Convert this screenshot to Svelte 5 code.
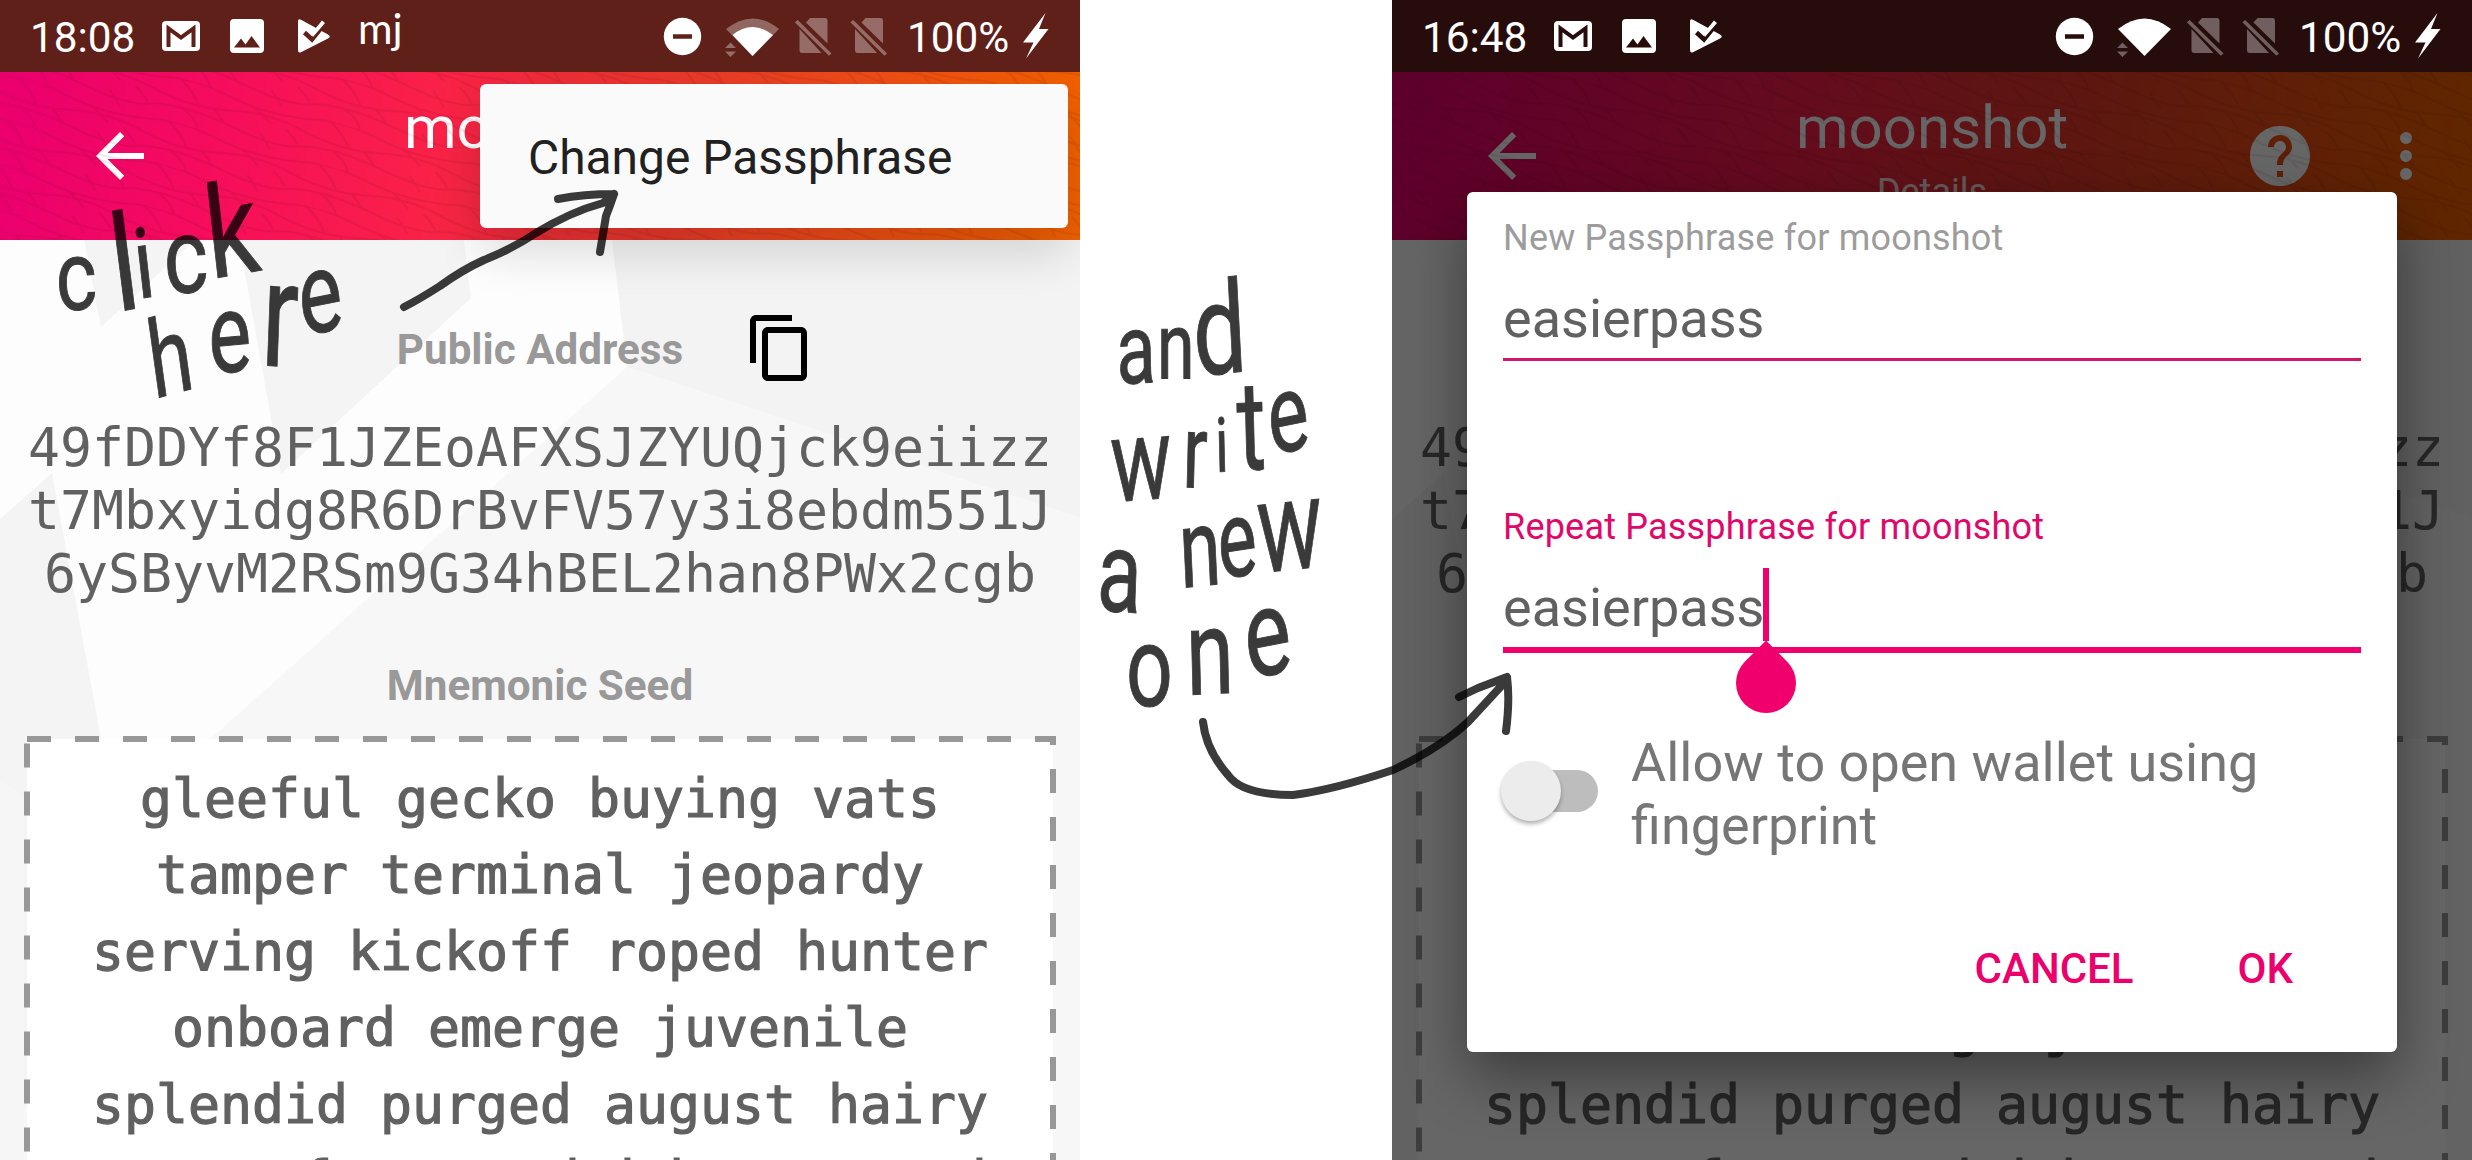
<script>
  const address = [
    '49fDDYf8F1JZEoAFXSJZYUQjck9eiizz',
    't7Mbxyidg8R6DrBvFV57y3i8ebdm551J',
    '6ySByvM2RSm9G34hBEL2han8PWx2cgb'
  ];
  const seed = [
    'gleeful gecko buying vats',
    'tamper terminal jeopardy',
    'serving kickoff roped hunter',
    'onboard emerge juvenile',
    'splendid purged august hairy',
    'answer faxes raishd overreach'
  ];

  // Handwritten notes: each letter has its own origin, size and tilt.
  const notes = [
    { word: 'click', sx: 0.8, x: [57, 117, 138, 165, 211], y: [311, 312, 299, 294, 279], r: [-3, -9, -8, -3, -8], s: [98, 134, 98, 106, 128] },
    { word: 'here', sx: 0.72, x: [154, 210, 260, 302], y: [399, 374, 365, 336], r: [-11, -4, 3, -8], s: [108, 112, 150, 114] },
    { word: 'and', sx: 0.74, x: [1117, 1157, 1195], y: [384, 378, 376], r: [-2, 0, -4], s: [98, 92, 128] },
    { word: 'write', sx: 0.7, x: [1112, 1182, 1216, 1238, 1271], y: [502, 487, 472, 470, 455], r: [-3, 2, -2, -2, -8], s: [116, 104, 76, 126, 110] },
    { word: 'a', sx: 0.72, x: [1096], y: [610], r: [3], s: [114] },
    { word: 'new', sx: 0.68, x: [1181, 1220, 1259], y: [588, 579, 573], r: [-4, -6, -4], s: [110, 108, 128] },
    { word: 'one', sx: 0.72, x: [1126, 1187, 1248], y: [706, 695, 679], r: [0, -2, -8], s: [114, 120, 122] }
  ];
</script>

{#snippet statusBar(time, weakWifi, notice)}
  <div class="status">
    <span class="time">{time}</span>
    <svg class="left-icons" viewBox="162 0 240 72" width="240" height="72">
      <rect x="162" y="21" width="38" height="30" rx="4" fill="#fff" />
      <path class="cut" d="M168.5 47V28.5L181 37.5L193.5 28.5V47" fill="none" stroke-width="4" />
      <rect x="230" y="19" width="34" height="34" rx="4" fill="#fff" />
      <path class="cutfill" d="M234 47.5l7-9 4.5 6 6-8.500 8.500 11.500z" />
      <path d="M298 21.500Q298 18 301 19.700L328 34.500Q331.500 36.500 328 38.500L301 52.300Q298 53.500 298 50z" fill="#fff" />
      <path class="cut" d="M304.500 32.500l7.500 7L326 22" fill="none" stroke-width="4.500" />
      <path d="M308.500 28.500l4 3.500L322 20.500l3 2.500-12 14" fill="#fff" />
      {#if notice}<text class="notice" x="358" y="43.500">mj</text>{/if}
    </svg>
    <svg class="right-icons" viewBox="660 0 240 72" width="240" height="72">
      <circle cx="682.500" cy="36.500" r="18.700" fill="#fff" />
      <path class="cut" d="M673 36.500h19" stroke-width="4.500" />
      <path d="M726 29Q752.500 8 779 29L752.500 56z" fill="#fff" opacity={weakWifi ? 0.32 : 1} />
      {#if weakWifi}<path d="M732.500 35Q752.500 19 773 35L752.500 56z" fill="#fff" />{/if}
      <path d="M725 48l5.500-5.500L736 48zM725 51.500h11L730.500 57z" fill="#fff" opacity=".35" />
      {#each [0, 55.500] as dx}
        <g transform="translate({dx} 0)" fill="#fff" opacity=".34">
          <path d="M806 22.500L810 18H825Q827.500 18 827.500 21V43.500zM799.500 29L821.500 53H802Q799.500 53 799.500 50z" />
          <path d="M794.800 22.300L797.700 20 831.500 53.500 829 55.800z" />
        </g>
      {/each}
    </svg>
    <span class="battery">100%</span>
    <svg class="bolt" viewBox="1023 0 26 72" width="26" height="72">
      <path d="M1045.500 13L1023 42.500H1033.500L1026 58.500 1048.500 29H1039z" fill="#fff" />
    </svg>
  </div>
{/snippet}

{#snippet screen(id)}
  <header class="bar">
    <svg class="texture" viewBox="0 0 1080 168" width="1080" height="168">
      <defs>
        <pattern id="scales-{id}" width="156" height="44" patternUnits="userSpaceOnUse" patternTransform="rotate(16)">
          <path d="M0 4Q30 -4 70 4T156 4M0 18Q40 26 78 17T156 18M0 32Q34 24 84 33T156 32M20 1Q34 8 44 21M96 7Q104 10 118 19M60 21Q66 24 74 32M134 20Q142 24 150 32M30 29Q44 34 50 44M110 31Q120 38 126 46" fill="none" stroke="#400" stroke-width="2" opacity=".09" />
        </pattern>
      </defs>
      <rect width="1080" height="168" fill="url(#scales-{id})" />
    </svg>
    <svg class="back" viewBox="0 0 24 24" width="72" height="72"><path d="M20 11H7.830l5.590-5.590L12 4l-8 8 8 8 1.410-1.410L7.830 13H20z" fill="#fff" /></svg>
    <div class="titles">
      <div class="title">moonshot</div>
      <div class="subtitle">Details</div>
    </div>
    <div class="actions">
      <svg viewBox="0 0 24 24" width="72" height="72"><path d="M12 2C6.480 2 2 6.480 2 12s4.480 10 10 10 10-4.480 10-10S17.520 2 12 2zm1 17h-2v-2h2v2zm2.070-7.750l-.9.920C13.450 12.900 13 13.500 13 15h-2v-.5c0-1.100.45-2.100 1.170-2.830l1.240-1.260c.37-.36.59-.86.59-1.410 0-1.100-.9-2-2-2s-2 .9-2 2H8c0-2.210 1.790-4 4-4s4 1.790 4 4c0 .88-.36 1.680-.93 2.250z" fill="#fff" /></svg>
      <svg viewBox="0 0 24 24" width="72" height="72"><path d="M12 8a2 2 0 100-4 2 2 0 000 4zm0 2a2 2 0 100 4 2 2 0 000-4zm0 6a2 2 0 100 4 2 2 0 000-4z" fill="#fff" /></svg>
    </div>
  </header>
  <main class="content">
    <svg class="facets" viewBox="0 240 1080 920" width="1080" height="920">
      <rect y="240" width="1080" height="920" fill="#fdfdfd" />
      <path d="M84 240H195L101 327zM239 240H464L471 298 281 474zM0 519L52 473 105 760V1160H0z" fill="#f4f4f4" />
      <path d="M612 240H1080V520L627 367z" fill="#f3f3f3" />
      <path d="M627 367L1080 518V1160H0L190 757z" fill="#f7f7f7" />
      <path d="M0 780L24 795V1160H0z" fill="#f6f6f6" />
    </svg>
    <div class="label-row">
      <span class="label">Public Address</span>
      <svg class="copy" viewBox="0 0 24 24" width="72" height="72"><path d="M16 1H4c-1.100 0-2 .9-2 2v14h2V3h12V1zm3 4H8c-1.100 0-2 .9-2 2v14c0 1.100.9 2 2 2h11c1.100 0 2-.9 2-2V7c0-1.100-.9-2-2-2zm0 16H8V7h11v14z" /></svg>
    </div>
    <div class="address">{#each address as line}<div>{line}</div>{/each}</div>
    <div class="label seed-label">Mnemonic Seed</div>
    <div class="seed">
      <svg class="dashes" viewBox="24 736 1032 424" width="1032" height="424">
        <path d="M27 739H1053V1200M27 743.500V1200" fill="none" stroke="#989898" stroke-width="6" stroke-dasharray="24 24" />
      </svg>
      {#each seed as line}<div class="seed-line">{line}</div>{/each}
    </div>
  </main>
{/snippet}

<div class="page">
  <section class="phone">
    {@render statusBar('18:08', true, true)}
    {@render screen('a')}
    <div class="menu">Change Passphrase</div>
  </section>

  <section class="phone dimmed">
    {@render statusBar('16:48', false, false)}
    {@render screen('b')}
    <div class="scrim"></div>
    <div class="dialog">
      <div class="hint">New Passphrase for moonshot</div>
      <div class="field">easierpass</div>
      <div class="hint active second">Repeat Passphrase for moonshot</div>
      <div class="field focused">
        <span class="value">easierpass<i class="cursor"></i><i class="handle"></i></span>
      </div>
      <div class="option">
        <div class="switch"><i class="track"></i><i class="thumb"></i></div>
        <div class="option-text">Allow to open wallet using fingerprint</div>
      </div>
      <div class="buttons"><span>CANCEL</span><span>OK</span></div>
    </div>
  </section>

  <svg class="ink" viewBox="0 0 2472 1160" width="2472" height="1160">
    {#each notes as n}
      <text transform="scale({n.sx} 1)">{#each n.word.split('') as ch, i}<tspan font-size={n.s[i]} x={n.x[i] / n.sx} y={n.y[i]} rotate={n.r[i]}>{ch}</tspan>{/each}</text>
    {/each}
    <path d="M404 307Q418 300 440 286Q462 270 484 260Q512 249 536 233Q570 212 603 203L614 194M558 199Q584 194 614 194Q610 206 606 216L600 252" />
    <path d="M1203 722Q1206 750 1228 775Q1242 795 1293 795Q1333 790 1393 770Q1440 748 1468 722L1505 682M1459 697L1478 688 1507 677Q1510 700 1506 731" />
  </svg>
</div>

<style>
  :global(body) { margin: 0; background: #fff; }
  .page { position: relative; display: flex; justify-content: space-between; width: 2472px; height: 1160px; overflow: hidden; background: #fff; font-family: Roboto, sans-serif; }
  .phone { --bar: #5f2019; position: relative; width: 1080px; height: 1160px; overflow: hidden; }
  .dimmed { --bar: #260c0a; }
  svg { display: block; flex: none; }

  .status { position: relative; z-index: 2; display: flex; height: 72px; background: var(--bar); color: #fff; font-size: 42.300px; line-height: 75px; box-sizing: border-box; padding-left: 30px; }
  .time { width: 132px; }
  .right-icons { margin-left: 258px; }
  .battery { width: 116px; margin-left: 7px; }
  .cut { stroke: var(--bar); }
  .cutfill { fill: var(--bar); }
  .notice { font: 400 42px Lato, sans-serif; fill: #fff; }

  .bar { position: relative; display: grid; grid-template-columns: 240px 1fr 240px; height: 168px; background: linear-gradient(99deg, #eb006e 2%, #f60c5d 20%, #fa2148 40%, #ec2e36 51%, #e83a28 64%, #ee4d15 80%, #f06000 98%); color: #fff; }
  .texture { position: absolute; inset: 0; }
  .back { margin: 48px 0 0 84px; }
  .titles { padding-top: 20px; text-align: center; }
  .title { font-size: 60px; line-height: 71px; }
  .subtitle { margin-top: 8px; font-size: 36px; line-height: 42px; opacity: .85; }
  .actions { display: flex; gap: 54px; padding-top: 48px; margin-left: 12px; }

  .content { position: relative; height: 920px; padding-top: 72px; box-sizing: border-box; }
  .content > * { position: relative; }
  .content > .facets { position: absolute; top: 0; left: 0; }
  .label { color: #999; font-size: 42.200px; font-weight: 700; line-height: 50px; text-align: center; }
  .label-row { display: grid; grid-template-columns: 1fr auto 1fr; align-items: center; }
  .label-row .label { grid-column: 2; padding-top: 3px; }
  .copy { margin-left: 61px; }
  .address, .seed { font-family: "DejaVu Sans Mono", monospace; font-size: 53.150px; color: #616161; text-align: center; }
  .address { margin-top: 33px; line-height: 63px; }
  .seed-label { margin-top: 55px; }
  .seed { margin: 25px 24px 0; padding-top: 25px; height: 450px; box-sizing: border-box; background: linear-gradient(#fff, #fff) 3px 3px / 1026px 100% no-repeat; }
  .seed-line { line-height: 76.400px; white-space: pre; -webkit-text-stroke: 1.200px #616161; }
  .dashes { position: absolute; top: 0; left: 0; overflow: visible; }

  .menu { position: absolute; top: 84px; left: 480px; width: 588px; height: 144px; padding-left: 48px; box-sizing: border-box; border-radius: 6px; background: #fafafa; color: #212121; font-size: 47.900px; line-height: 148px; box-shadow: 0 24px 48px rgba(0, 0, 0, .14); }

  .scrim { position: absolute; inset: 72px 0 0; background: rgba(0, 0, 0, .6); }
  .dialog { position: absolute; top: 192px; left: 75px; width: 930px; height: 860px; padding: 25px 36px 0; box-sizing: border-box; border-radius: 6px; background: #fff; box-shadow: 0 24px 60px rgba(0, 0, 0, .42); }
  .hint { font-size: 36px; line-height: 42px; letter-spacing: .2px; color: #9c9c9c; }
  .active { color: #e0096b; }
  .second { margin-top: 145px; }
  .field { margin-top: 28px; padding-bottom: 8px; border-bottom: 3px solid #d3156b; font-size: 54px; line-height: 63px; color: #616161; }
  .focused { border-bottom: 6px solid #f0006c; }
  .value { position: relative; }
  .cursor { position: absolute; right: -5px; top: -8px; width: 6px; height: 73px; background: #f0006c; }
  .handle { position: absolute; right: -32px; top: 77px; width: 60px; height: 60px; border-radius: 0 50% 50% 50%; background: #f0006c; transform: rotate(45deg); }
  .option { display: flex; margin-top: 78px; }
  .switch { position: relative; width: 128px; height: 126px; }
  .track { position: absolute; left: 12px; top: 39px; width: 83px; height: 42px; border-radius: 21px; background: #bdbdbd; }
  .thumb { position: absolute; left: -2px; top: 30px; width: 60px; height: 60px; border-radius: 50%; background: #ececec; box-shadow: 0 3px 4px rgba(0, 0, 0, .3); }
  .option-text { flex: 1; font-size: 54px; line-height: 63px; color: #767676; }
  .buttons { display: flex; justify-content: flex-end; gap: 104px; margin-top: 87px; padding-right: 68px; font-size: 42px; font-weight: 500; line-height: 50px; color: #ec006c; }

  .ink { position: absolute; top: 0; left: 0; opacity: .77; pointer-events: none; }
  .ink text { font-family: Roboto, sans-serif; fill: #000; stroke: #000; stroke-width: 1; }
  .ink path { fill: none; stroke: #000; stroke-width: 8; stroke-linecap: round; stroke-linejoin: round; }
</style>
